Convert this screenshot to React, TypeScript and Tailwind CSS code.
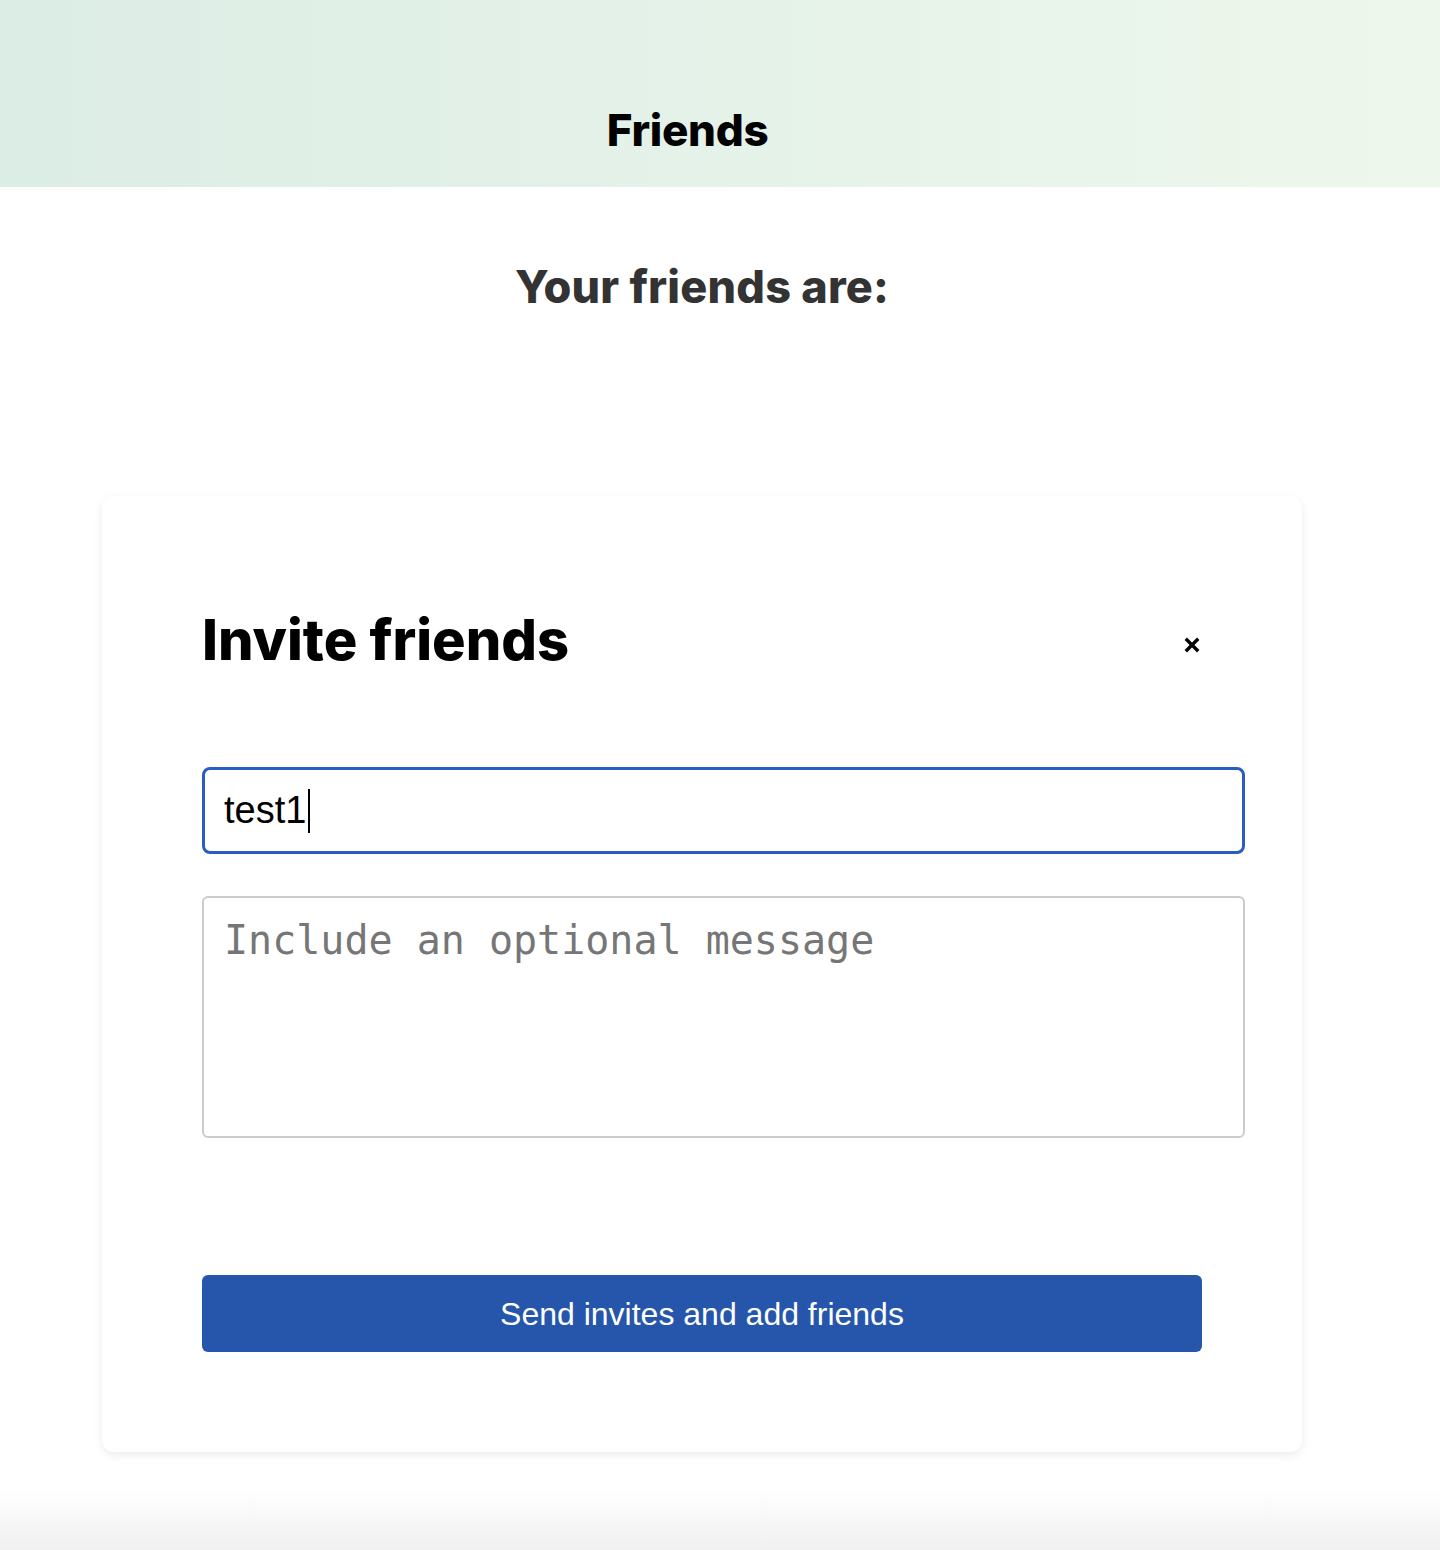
import { useState } from "react";

const headingFont = { fontFamily: "Inter, 'Noto Sans', sans-serif" };

function CloseIcon() {
  return (
    <svg viewBox="0 0 16 16" className="h-[16px] w-[16px]" aria-hidden="true">
      <path d="M3 3 L13 13 M13 3 L3 13" stroke="#000" strokeWidth="3.4" strokeLinecap="square" />
    </svg>
  );
}

function InviteCard() {
  const [message, setMessage] = useState("");

  return (
    <section className="ml-[102px] w-[1200px] rounded-[12px] bg-white px-[100px] pb-[100px] pt-[104px] shadow-[0_3px_10px_rgba(0,0,0,0.08)]">
      <div className="flex items-center justify-between">
        <h2 className="text-[56px] font-extrabold leading-[80px] text-black" style={headingFont}>
          Invite friends
        </h2>
        <button type="button" className="-mr-[5px] mt-[10px] flex h-[30px] w-[30px] items-center justify-center" aria-label="Close">
          <CloseIcon />
        </button>
      </div>

      <div className="mt-[87px] flex h-[87px] w-[1043px] items-center rounded-[8px] border-[3px] border-[#2a5cc4] px-[19px] font-['Liberation_Sans',Arial,sans-serif] text-[38px] text-black">
        <span>test1</span>
        <span className="ml-[2px] h-[44px] w-[2px] bg-black" />
      </div>

      <textarea
        value={message}
        onChange={(e) => setMessage(e.target.value)}
        placeholder="Include an optional message"
        className="mt-[42px] block h-[242px] w-[1043px] resize-none rounded-[6px] border-2 border-[#cccccc] px-[20px] pt-[16px] font-['DejaVu_Sans_Mono',monospace] text-[40px] leading-[52px] text-black outline-none placeholder:text-[#767676]"
      />

      <button
        type="button"
        className="mt-[137px] flex h-[77px] w-[1000px] items-center justify-center rounded-[6px] bg-[#2556ac] font-['Liberation_Sans',Arial,sans-serif] text-[32px] text-white"
      >
        Send invites and add friends
      </button>
    </section>
  );
}

export default function App() {
  return (
    <div className="flex min-h-[1550px] flex-col bg-white">
      <header className="flex h-[187px] items-end justify-center bg-gradient-to-r from-[#dcede5] to-[#eef7ec] pb-[27px] pr-[65px]">
        <h1 className="text-[44px] font-extrabold leading-[60px] tracking-[-0.3px] text-black" style={headingFont}>
          Friends
        </h1>
      </header>

      <main className="flex-1">
        <h2
          className="ml-[102px] mt-[70px] w-[1200px] text-center text-[45px] font-extrabold leading-[60px] tracking-[0.2px] text-[#333333]"
          style={headingFont}
        >
          Your friends are:
        </h2>
        <div className="mt-[179px]">
          <InviteCard />
        </div>
      </main>

      <div className="h-[60px] bg-gradient-to-b from-white to-[#f0f0f0]" />
    </div>
  );
}
